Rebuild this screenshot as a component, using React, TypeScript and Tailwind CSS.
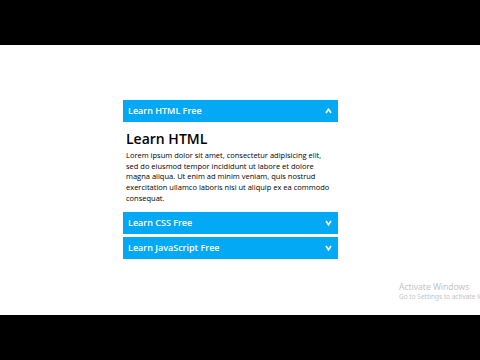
import { useState } from 'react';

const items = [
  {
    title: 'Learn HTML Free',
    heading: 'Learn HTML',
    body: 'Lorem ipsum dolor sit amet, consectetur adipisicing elit, sed do eiusmod tempor incididunt ut labore et dolore magna aliqua. Ut enim ad minim veniam, quis nostrud exercitation ullamco laboris nisi ut aliquip ex ea commodo consequat.',
  },
  { title: 'Learn CSS Free', heading: 'Learn CSS', body: '' },
  { title: 'Learn JavaScript Free', heading: 'Learn JavaScript', body: '' },
];

function Chevron({ up }: { up: boolean }) {
  return (
    <svg width="7" height="6" viewBox="0 0 7 6" aria-hidden="true">
      <path
        d={up ? 'M1 5 L3.5 1.2 L6 5' : 'M1 1 L3.5 4.8 L6 1'}
        fill="none"
        stroke="white"
        strokeWidth="1.6"
        strokeLinejoin="miter"
      />
    </svg>
  );
}

export default function App() {
  const [open, setOpen] = useState(0);

  return (
    <div className="w-[480px] h-[360px] bg-black flex flex-col font-['Open_Sans',sans-serif]">
      <div className="h-[45px]" />
      <div className="relative h-[270px] bg-white pt-[55px] pl-[123px] overflow-hidden">
        <div className="w-[215px]">
          {items.map((item, i) => (
            <div key={item.title} className="mb-[3px]">
              <button
                onClick={() => setOpen(open === i ? -1 : i)}
                className="w-full h-[22px] bg-[#03a9f4] flex items-center justify-between pl-[5px] pr-[6px] text-white text-[9px] font-semibold"
              >
                <span>{item.title}</span>
                <Chevron up={open === i} />
              </button>
              {open === i && (
                <div className="px-[3px] pt-[8px] pb-[5px] text-black">
                  <h2 className="text-[14px] leading-[18px] font-semibold">{item.heading}</h2>
                  <p className="mt-[2px] text-[7.5px] leading-[10.7px] font-medium">{item.body}</p>
                </div>
              )}
            </div>
          ))}
        </div>

        {/* windows watermark */}
        <div className="absolute left-[399px] top-[236px] text-[#c4c4c4] whitespace-nowrap font-['Noto_Sans',sans-serif]">
          <p className="text-[8.5px] leading-[11px]">Activate Windows</p>
          <p className="text-[6.5px] leading-[10px]">Go to Settings to activate Windows.</p>
        </div>
      </div>
    </div>
  );
}
